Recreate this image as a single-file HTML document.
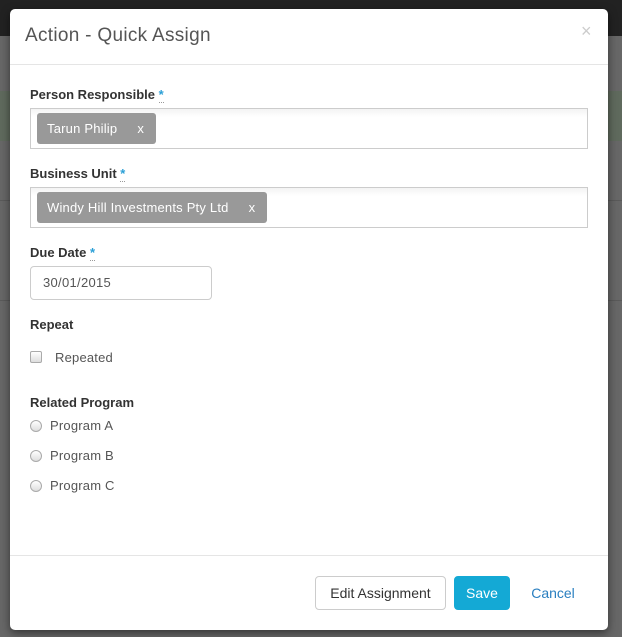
<!DOCTYPE html>
<html><head><style>
*{box-sizing:border-box;margin:0;padding:0}
body{width:622px;height:637px;background:#676767;font-family:"Liberation Sans",sans-serif;position:relative;overflow:hidden;color:#333}
.top{position:absolute;left:0;top:0;width:622px;height:36px;background:#222}
.green{position:absolute;left:0;top:91px;width:622px;height:50px;background:#5f6a5d}
.line{position:absolute;left:0;width:622px;height:1px;background:#5a5a5a}
.modal{position:absolute;left:10px;top:9px;width:598px;height:621px;background:#fff;border-radius:5px;box-shadow:0 3px 9px rgba(0,0,0,.5)}
.a{position:absolute}
.title{left:15px;top:16px;font-size:19px;color:#555;letter-spacing:0.3px}
.close{left:571px;top:12px;font-size:18px;color:#ccc}
.hr{left:0;width:598px;height:1px;background:#e5e5e5}
.lbl{font-size:13px;font-weight:bold;color:#333}
.lbl span{color:#2a9fd6;border-bottom:1px dotted #999}
.box{left:20px;width:558px;height:41px;border:1px solid #ccc;background:linear-gradient(#f3f3f3,#fff 8px)}
.tag{position:absolute;left:6px;top:4px;height:31px;background:#999;border-radius:3px;color:#fff;font-size:13px;line-height:31px;padding-left:10px;letter-spacing:0.2px}
.tag b{font-weight:normal;margin-left:20px;margin-right:12px}
.inp{left:20px;top:257px;width:182px;height:34px;border:1px solid #ccc;border-radius:4px;font-size:13px;line-height:32px;padding-left:12px;color:#555;letter-spacing:0.3px}
.cb{width:12px;height:12px;border:1px solid #aaa;border-radius:2px;background:linear-gradient(#fff,#ddd)}
.rd{width:12px;height:12px;border:1px solid #aaa;border-radius:50%;background:linear-gradient(#fff,#ddd)}
.t{font-size:13px;color:#555;letter-spacing:0.2px}
.btn{top:567px;height:34px;border-radius:4px;font-size:14px;line-height:32px;text-align:center}
</style></head><body>
<div class="top"></div>
<div class="green"></div>
<div class="line" style="top:200px"></div>
<div class="line" style="top:300px"></div>
<div class="modal">
<div class="a title">Action - Quick Assign</div>
<div class="a close">×</div>
<div class="a hr" style="top:55px"></div>
<div class="a lbl" style="left:20px;top:78px">Person Responsible <span>*</span></div>
<div class="a box" style="top:99px"><div class="tag">Tarun Philip<b>x</b></div></div>
<div class="a lbl" style="left:20px;top:157px">Business Unit <span>*</span></div>
<div class="a box" style="top:178px"><div class="tag">Windy Hill Investments Pty Ltd<b>x</b></div></div>
<div class="a lbl" style="left:20px;top:236px">Due Date <span>*</span></div>
<div class="a inp">30/01/2015</div>
<div class="a lbl" style="left:20px;top:308px">Repeat</div>
<div class="a cb" style="left:20px;top:342px"></div>
<div class="a t" style="left:45px;top:341px">Repeated</div>
<div class="a lbl" style="left:20px;top:386px">Related Program</div>
<div class="a rd" style="left:20px;top:411px"></div><div class="a t" style="left:40px;top:409px">Program A</div>
<div class="a rd" style="left:20px;top:441px"></div><div class="a t" style="left:40px;top:439px">Program B</div>
<div class="a rd" style="left:20px;top:471px"></div><div class="a t" style="left:40px;top:469px">Program C</div>
<div class="a hr" style="top:546px"></div>
<div class="a btn" style="left:305px;width:131px;border:1px solid #ccc;color:#333">Edit Assignment</div>
<div class="a btn" style="left:444px;width:56px;background:#14a9d5;color:#fff;line-height:34px">Save</div>
<div class="a btn" style="left:513px;width:60px;color:#2a7fc0;line-height:34px">Cancel</div>
</div>
</body></html>
